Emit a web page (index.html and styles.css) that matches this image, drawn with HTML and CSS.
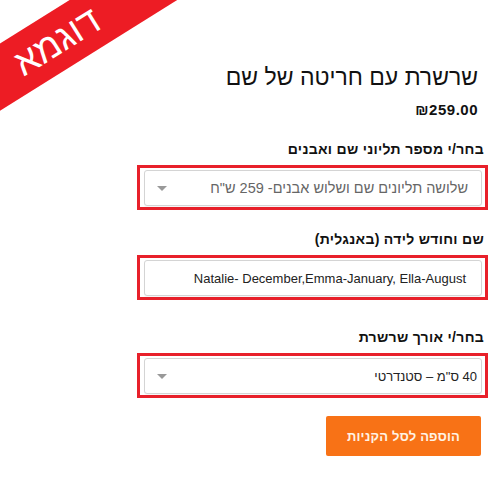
FILE: index.html
```html
<!DOCTYPE html>
<html lang="he">
<head>
    <meta charset="utf-8">
    <link rel="stylesheet" href="styles.css">
</head>
<body>
    <div class="ribbon">דוגמא</div>

    <div class="product" dir="rtl">
        <h1 class="title">שרשרת עם חריטה של שם</h1>
        <div class="price">&#8362;259.00</div>

        <div class="field">
            <label class="label">בחר/י מספר תליוני שם ואבנים</label>
            <div class="mark">
                <div class="control select muted">
                    <span>שלושה תליונים שם ושלוש אבנים- 259 ש"ח</span>
                    <span class="arrow"></span>
                </div>
            </div>
        </div>

        <div class="field">
            <label class="label">שם וחודש לידה (באנגלית)</label>
            <div class="mark">
                <div class="control input">
                    <span dir="ltr">Natalie- December,Emma-January, Ella-August</span>
                </div>
            </div>
        </div>

        <div class="field field-last">
            <label class="label">בחר/י אורך שרשרת</label>
            <div class="mark">
                <div class="control select short">
                    <span>40 ס"מ – סטנדרטי</span>
                    <span class="arrow"></span>
                </div>
            </div>
        </div>

        <div class="actions">
            <button class="add-btn">הוספה לסל הקניות</button>
        </div>
    </div>
</body>
</html>
```

FILE: styles.css
```css
html, body{
    margin: 0;
    padding: 0;
    width: 100%;
    height: 100%;
}
body{
    background: #fff;
    font-family: "Liberation Sans", "DejaVu Sans", sans-serif;
    color: #111;
    overflow: hidden;
    position: relative;
}
.ribbon{
    position: absolute;
    left: -93px;
    top: 13px;
    width: 300px;
    height: 57px;
    line-height: 57px;
    background: #ed1c24;
    color: #fff;
    text-align: center;
    font-size: 37px;
    direction: rtl;
    transform: rotate(-32deg);
}
.product{
    margin-left: 137px;
    width: 351px;
    padding-top: 62px;
}
.title{
    margin: 0 10px 0 0;
    font-size: 23px;
    font-weight: normal;
    line-height: 30px;
    color: #111;
}
.price{
    margin: 8px 10px 0 0;
    font-size: 15px;
    font-weight: bold;
    line-height: 20px;
    letter-spacing: 0.5px;
}
.field{
    margin-top: 20px;
}
.label{
    display: block;
    margin-right: 4px;
    font-size: 14px;
    font-weight: bold;
    letter-spacing: 0.3px;
    line-height: 18px;
    margin-bottom: 7px;
}
.mark{
    border: 3px solid #e8202a;
    padding: 2px 3px 1px 4px;
}
.control{
    height: 34px;
    border: 1px solid #d4d4d4;
    border-radius: 3px;
    background: #fff;
    display: flex;
    align-items: center;
    justify-content: space-between;
    padding: 0 13px 0 12px;
    font-size: 14.5px;
    color: #222;
    box-shadow: 0 1px 1px rgba(0,0,0,0.04);
}
.muted{
    color: #666;
}
.input{
    padding-right: 15px;
    font-size: 13px;
}
.short{
    padding-right: 4px;
    font-size: 13px;
}
.arrow{
    width: 0;
    height: 0;
    border-left: 5px solid transparent;
    border-right: 5px solid transparent;
    border-top: 5px solid #999;
}
.field-last{
    margin-top: 28px;
}
.actions{
    margin-top: 18px;
    padding-right: 7px;
}
.add-btn{
    width: 155px;
    height: 40px;
    border: 0;
    border-radius: 2px;
    background: #f87216;
    color: #fff2e4;
    font-family: "Liberation Sans", "DejaVu Sans", sans-serif;
    font-size: 13px;
    font-weight: bold;
    letter-spacing: 0.2px;
}
```
